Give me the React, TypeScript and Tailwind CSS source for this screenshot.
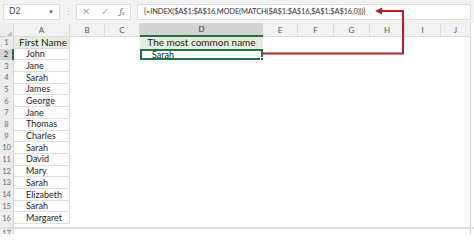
import { Fragment } from 'react';

const cols = [
  { name: 'A', w: 56 },
  { name: 'B', w: 35 },
  { name: 'C', w: 35 },
  { name: 'D', w: 123 },
  { name: 'E', w: 35 },
  { name: 'F', w: 36 },
  { name: 'G', w: 36 },
  { name: 'H', w: 35 },
  { name: 'I', w: 36 },
  { name: 'J', w: 30 },
];

const names = [
  'John',
  'Jane',
  'Sarah',
  'James',
  'George',
  'Jane',
  'Thomas',
  'Charles',
  'Sarah',
  'David',
  'Mary',
  'Sarah',
  'Elizabeth',
  'Sarah',
  'Margaret',
];

const formula = '{=INDEX($A$1:$A$16,MODE(MATCH($A$1:$A$16,$A$1:$A$16,0)))}';

function FormulaBar() {
  return (
    <div className="flex items-center h-[23px] bg-[#f3f3f3] pl-[3px] text-[#444]">
      <div className="flex items-center justify-between w-[57px] h-[16px] bg-white border border-[#dcdcdc] px-[5px]">
        <span className="text-[8.5px]">D2</span>
        <span className="text-[6px] text-[#666]">▼</span>
      </div>
      <span className="w-[16px] text-center text-[9px] text-[#bbb] leading-none">⋮</span>
      <div className="flex items-center justify-around w-[55px] h-[16px] bg-white border border-[#dcdcdc] text-[#aaa]">
        <span className="text-[10px]">✕</span>
        <span className="text-[10px]">✓</span>
        <span className="text-[9px] italic font-serif text-[#666]">
          f<sub className="text-[6px]">x</sub>
        </span>
      </div>
      <div className="flex items-center w-[334px] ml-[6px] h-[16px] bg-white border border-[#dcdcdc] pl-[6px]">
        <span className="text-[7.5px] text-[#333] tracking-[-0.15px] whitespace-nowrap">{formula}</span>
      </div>
    </div>
  );
}

export default function App() {
  const gridCols = `14px ${cols.map(c => `${c.w}px`).join(' ')}`;
  return (
    <div
      className="relative w-[474px] h-[234px] overflow-hidden bg-white"
      style={{ fontFamily: 'Lato, "Liberation Sans", sans-serif' }}
    >
      <FormulaBar />
      <div className="flex w-[474px]">
        <div className="w-[471px] border-r border-[#d0d0d0]">
          <div className="grid" style={{ gridTemplateColumns: gridCols }}>
            {/* column headers */}
            <div className="h-[14px] bg-[#ececec] border-r border-b border-[#d4d4d4] flex items-end justify-end">
              <span className="text-[6px] text-[#bbb] leading-none pr-[1px]">◢</span>
            </div>
            {cols.map(c => (
              <div
                key={c.name}
                className={
                  c.name === 'D'
                    ? 'h-[14px] bg-[#d4d4d4] border-b-2 border-[#217346] flex items-center justify-center text-[8px] text-[#333]'
                    : 'h-[14px] bg-[#f2f2f2] border-r border-b border-[#dadada] flex items-center justify-center text-[8px] text-[#555]'
                }
              >
                {c.name}
              </div>
            ))}

            {/* row 1 */}
            <div className="h-[11.7px] bg-[#ececec] border-r border-[#d4d4d4] flex items-center justify-center text-[7.5px] text-[#666]">
              1
            </div>
            <div className="h-[11.7px] bg-[#e3efda] border-r border-b border-[#d9d9d9] flex items-center pl-[5px] text-[10px] text-[#222] whitespace-nowrap">
              First Name
            </div>
            <div className="h-[11.7px]" />
            <div className="h-[11.7px]" />
            <div className="h-[11.7px] bg-[#e3efda] flex items-center justify-center text-[10px] text-[#222] whitespace-nowrap">
              The most common name
            </div>
            <div className="h-[11.7px] col-span-6" />

            {/* rows 2-16 */}
            {names.map((n, i) => {
              const row = i + 2;
              return (
                <Fragment key={row}>
                  <div
                    className={
                      row === 2
                        ? 'h-[11.7px] bg-[#d4d4d4] border-r-2 border-[#217346] flex items-center justify-center text-[7.5px] text-[#333]'
                        : 'h-[11.7px] bg-[#ececec] border-r border-[#d4d4d4] flex items-center justify-center text-[7.5px] text-[#666]'
                    }
                  >
                    {row}
                  </div>
                  <div className="h-[11.7px] border-r border-b border-[#dedede] flex items-center pl-[12px] text-[9px] text-[#222] whitespace-nowrap">
                    {n}
                  </div>
                  <div className="h-[11.7px]" />
                  <div className="h-[11.7px]" />
                  {row === 2 ? (
                    <div className="relative h-[11.7px] border-2 border-[#217346] flex items-center pl-[10px] text-[9px] text-[#222]">
                      Sarah
                      <span className="absolute right-[-3px] bottom-[-3px] w-[4px] h-[4px] bg-[#217346] border border-white" />
                    </div>
                  ) : (
                    <div className="h-[11.7px]" />
                  )}
                  <div className="h-[11.7px] col-span-6" />
                </Fragment>
              );
            })}

            {/* row 17 */}
            <div className="h-[12px] bg-[#ececec] border-r border-[#d4d4d4] flex items-start justify-center pt-[6px] text-[7.5px] text-[#666] leading-none">
              17
            </div>
            <div className="h-[12px] col-span-10" />
          </div>
        </div>
      </div>

      {/* window edge over the last row */}
      <div className="absolute left-0 right-0 top-[227px] h-[2px] bg-[#dcdcdc]" />

      {/* red arrow from the selected cell to the formula */}
      <svg className="absolute left-0 top-0" width="474" height="234" viewBox="0 0 474 234">
        <path d="M263 53.5 H403 V11 H381" fill="none" stroke="#b3202b" strokeWidth="2" />
        <path d="M375 11 L382 7.5 L382 14.5 Z" fill="#b3202b" />
      </svg>
    </div>
  );
}
